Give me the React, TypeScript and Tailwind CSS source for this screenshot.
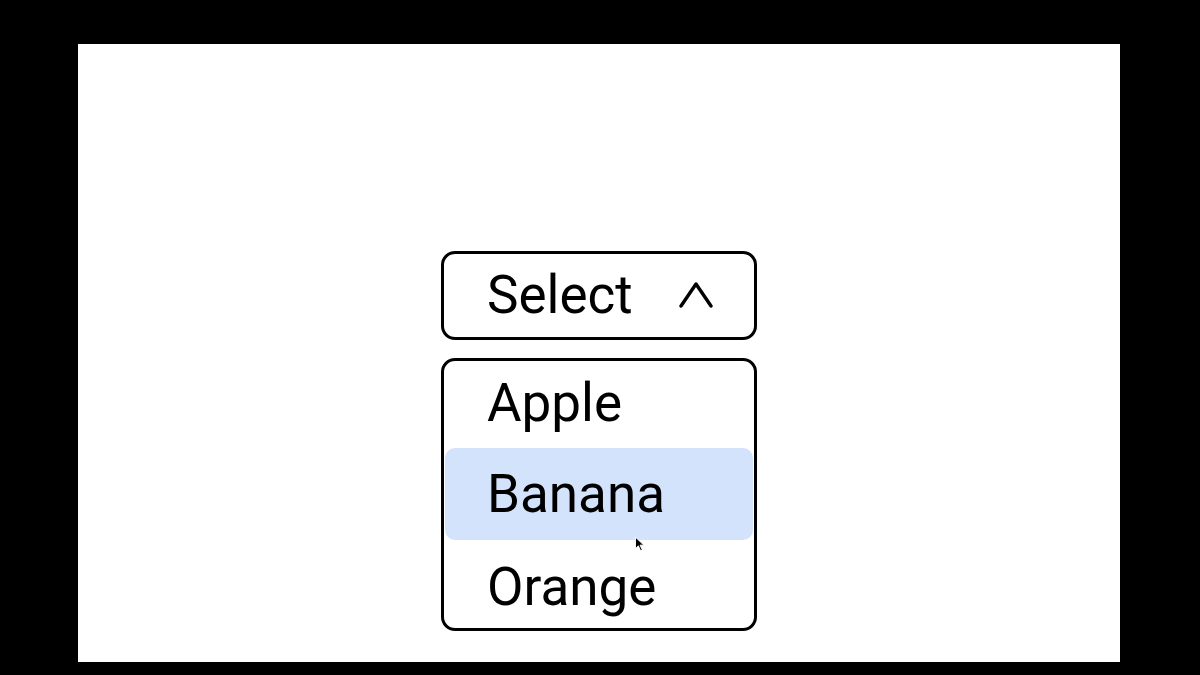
import React from "react";

export default function App() {
  const font = { fontFamily: "Roboto, 'Noto Sans', sans-serif" };
  return (
    <div className="w-[1200px] h-[675px] bg-black pt-[44px] pl-[78px]" style={font}>
      <div className="w-[1042px] h-[618px] bg-white flex flex-col items-center pt-[207px]">
        <div className="w-[316px] h-[89px] border-[3px] border-black rounded-[14px] flex items-center justify-between pl-[43px] pr-[41px]">
          <span className="text-[53px] leading-none text-black">Select</span>
          <svg width="34" height="28" viewBox="0 0 34 28" className="mt-[-1px]">
            <polyline points="2,25 17,3 32,25" fill="none" stroke="black" strokeWidth="3.4" strokeLinecap="round" strokeLinejoin="round" />
          </svg>
        </div>
        <div className="relative mt-[18px] w-[316px] h-[273px] border-[3px] border-black rounded-[14px] px-px">
          <div className="h-[87px] flex items-center pl-[42px] pb-[3px]">
            <span className="text-[53px] leading-none text-black">Apple</span>
          </div>
          <div className="h-[92px] flex items-center pl-[42px] bg-[#d3e3fc] rounded-[10px]">
            <span className="text-[53px] leading-none text-black">Banana</span>
          </div>
          <div className="h-[87px] flex items-center pl-[42px] pt-[7px]">
            <span className="text-[53px] leading-none text-black">Orange</span>
          </div>
          <svg className="absolute left-[190px] top-[175px]" width="11" height="16" viewBox="0 0 9 14">
            <path d="M1 1 L1 11 L3.5 8.6 L5.5 13 L7 12.3 L5 8 L8.3 8 Z" fill="black" stroke="white" strokeWidth="0.8" />
          </svg>
        </div>
      </div>
    </div>
  );
}
